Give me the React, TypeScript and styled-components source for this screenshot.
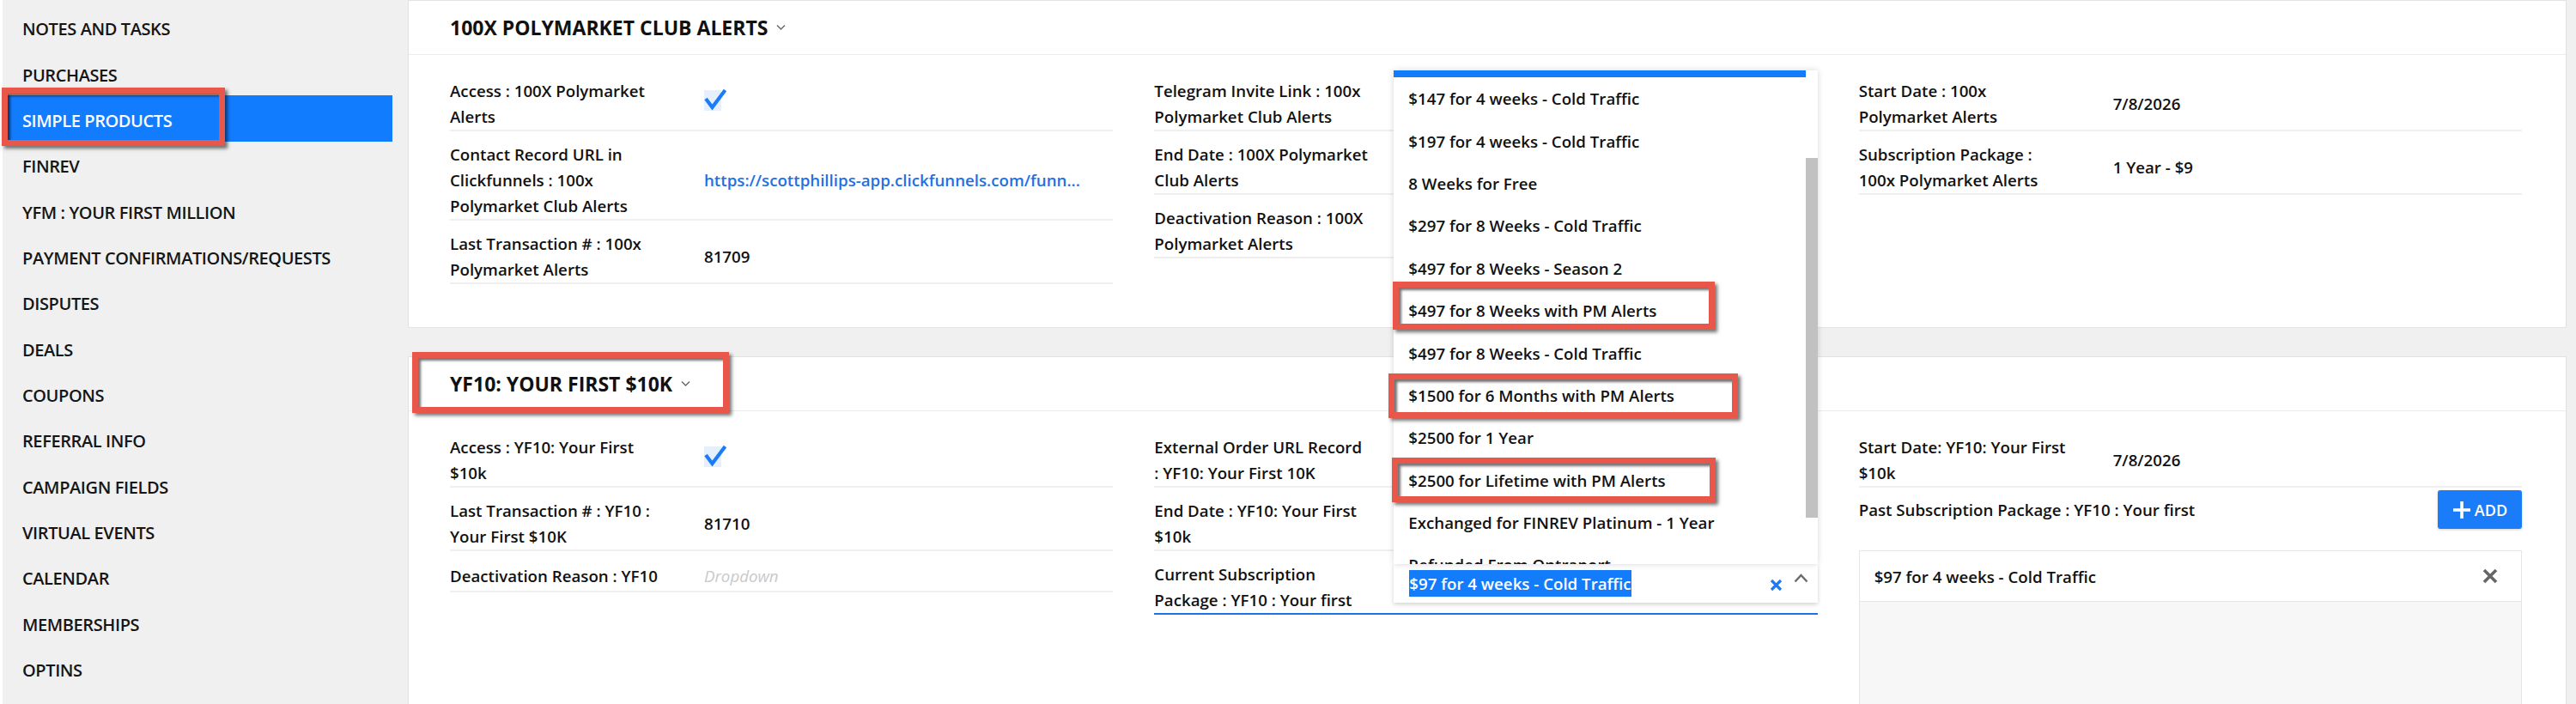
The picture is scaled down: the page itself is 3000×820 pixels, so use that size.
import React from "react";
import styled, { createGlobalStyle } from "styled-components";

type FieldKind = "check" | "link" | "text" | "placeholder" | "none" | "combo";

type Field = {
  label: string[];
  kind: FieldKind;
  value?: string;
};

type Callout = { top: number; left: number; width: number; height: number };

const navItems = [
  "Notes and Tasks",
  "Purchases",
  "Simple Products",
  "FinRev",
  "YFM : Your First Million",
  "Payment Confirmations/Requests",
  "Disputes",
  "Deals",
  "Coupons",
  "Referral Info",
  "Campaign Fields",
  "Virtual Events",
  "Calendar",
  "Memberships",
  "Optins",
];

const packageOptions: { text: string; callout?: Callout }[] = [
  { text: "$147 for 4 weeks - Cold Traffic" },
  { text: "$197 for 4 weeks - Cold Traffic" },
  { text: "8 Weeks for Free" },
  { text: "$297 for 8 Weeks - Cold Traffic" },
  { text: "$497 for 8 Weeks - Season 2" },
  { text: "$497 for 8 Weeks with PM Alerts", callout: { top: -9, left: -1, width: 375, height: 56 } },
  { text: "$497 for 8 Weeks - Cold Traffic" },
  { text: "$1500 for 6 Months with PM Alerts", callout: { top: -1, left: -6, width: 407, height: 52 } },
  { text: "$2500 for 1 Year" },
  { text: "$2500 for Lifetime with PM Alerts", callout: { top: -2, left: -2, width: 377, height: 52 } },
  { text: "Exchanged for FINREV Platinum - 1 Year" },
  { text: "Refunded From Ontraport" },
];

const polymarketColumns: Field[][] = [
  [
    { label: ["Access : 100X Polymarket", "Alerts"], kind: "check" },
    {
      label: ["Contact Record URL in", "Clickfunnels : 100x", "Polymarket Club Alerts"],
      kind: "link",
      value: "https://scottphillips-app.clickfunnels.com/funn...",
    },
    { label: ["Last Transaction # : 100x", "Polymarket Alerts"], kind: "text", value: "81709" },
  ],
  [
    { label: ["Telegram Invite Link : 100x", "Polymarket Club Alerts"], kind: "none" },
    { label: ["End Date : 100X Polymarket", "Club Alerts"], kind: "none" },
    { label: ["Deactivation Reason : 100X", "Polymarket Alerts"], kind: "none" },
  ],
  [
    { label: ["Start Date : 100x", "Polymarket Alerts"], kind: "text", value: "7/8/2026" },
    { label: ["Subscription Package :", "100x Polymarket Alerts"], kind: "text", value: "1 Year - $9" },
  ],
];

const yf10Columns: Field[][] = [
  [
    { label: ["Access : YF10: Your First", "$10k"], kind: "check" },
    { label: ["Last Transaction # : YF10 :", "Your First $10K"], kind: "text", value: "81710" },
    { label: ["Deactivation Reason : YF10"], kind: "placeholder", value: "Dropdown" },
  ],
  [
    { label: ["External Order URL Record", ": YF10: Your First 10K"], kind: "none" },
    { label: ["End Date : YF10: Your First", "$10k"], kind: "none" },
    { label: ["Current Subscription", "Package : YF10 : Your first"], kind: "combo" },
  ],
  [{ label: ["Start Date: YF10: Your First", "$10k"], kind: "text", value: "7/8/2026" }],
];

const GlobalStyle = createGlobalStyle`
  html, body {
    margin: 0;
    padding: 0;
    background: #fff;
  }
  body {
    font-family: "Open Sans", "Noto Sans", sans-serif;
    color: #111;
  }
  * {
    box-sizing: border-box;
  }
`;

const Page = styled.div`
  display: flex;
  width: 3000px;
  height: 820px;
  overflow: hidden;
  padding-left: 3px;
  background: #fff;
`;

const Sidebar = styled.nav`
  flex: 0 0 472px;
  background: #f0f0f0;
  padding: 4.8px 18px 0 0;
`;

const NavItem = styled.div<{ $active?: boolean }>`
  position: relative;
  height: 53.33px;
  display: flex;
  align-items: center;
  padding: 5px 0 0 23px;
  font-size: 20px;
  font-weight: 600;
  letter-spacing: -0.4px;
  text-transform: uppercase;
  color: ${(p) => (p.$active ? "#fff" : "#151515")};
  background: ${(p) => (p.$active ? "#127cff" : "transparent")};
`;

const RedBox = styled.span<{ $box: Callout }>`
  position: absolute;
  top: ${(p) => p.$box.top}px;
  left: ${(p) => p.$box.left}px;
  width: ${(p) => p.$box.width}px;
  height: ${(p) => p.$box.height}px;
  border: 7px solid #e9574b;
  box-shadow: 3px 3px 4px rgba(0, 0, 0, 0.55), inset 3px 3px 3px rgba(0, 0, 0, 0.55);
  pointer-events: none;
  z-index: 5;
`;

const Main = styled.main`
  flex: 1;
  display: flex;
  flex-direction: column;
  gap: 33px;
  padding-right: 11px;
  background: #f0f0f0;
`;

const Card = styled.section`
  flex-shrink: 0;
  background: #fff;
  border: 1px solid #e2e2e2;
`;

const CardHeader = styled.header`
  position: relative;
  height: 63px;
  display: flex;
  align-items: center;
  gap: 10px;
  padding-left: 48px;
  border-bottom: 1px solid #ececec;
  font-size: 23px;
  font-weight: 700;
  text-transform: uppercase;
  color: #111;
`;

const CardBody = styled.div<{ $bottom: number }>`
  display: grid;
  grid-template-columns: repeat(3, 1fr);
  align-items: start;
  column-gap: 48px;
  padding: 15px 51px ${(p) => p.$bottom}px 48px;
`;

const Column = styled.div`
  display: flex;
  flex-direction: column;
`;

const Row = styled.div<{ $focused?: boolean }>`
  position: relative;
  display: grid;
  grid-template-columns: 296px 1fr;
  align-items: center;
  padding-top: 12px;
  border-bottom: 2px solid ${(p) => (p.$focused ? "#1d72e8" : "#efefef")};
`;

const Label = styled.div`
  font-size: 18.7px;
  font-weight: 600;
  line-height: 30px;
  white-space: nowrap;
`;

const Value = styled.div`
  font-size: 18.7px;
  font-weight: 600;
  line-height: 30px;
  white-space: nowrap;
`;

const LinkValue = styled.a`
  font-size: 18.7px;
  font-weight: 600;
  line-height: 30px;
  color: #1f6fe5;
  text-decoration: none;
  white-space: nowrap;
`;

const Placeholder = styled.div`
  font-size: 18.7px;
  line-height: 34px;
  font-style: italic;
  color: #c9c9c9;
`;

const CheckWrap = styled.div`
  display: flex;
  margin-bottom: 11px;
`;

const SelectBox = styled.div`
  position: absolute;
  left: 279px;
  right: 0;
  top: 15px;
  height: 45px;
  display: flex;
  align-items: center;
  padding: 0 11px 0 18px;
  background: #fff;
  box-shadow: 0 2px 5px rgba(0, 0, 0, 0.18);
  z-index: 20;
`;

const SelectedText = styled.span`
  font-size: 18.7px;
  font-weight: 600;
  line-height: 31px;
  color: #fff;
  background: #137cfb;
  white-space: nowrap;
`;

const SelectIcons = styled.div`
  margin-left: auto;
  align-self: stretch;
  display: flex;
  gap: 13px;
`;

const IconSlot = styled.span<{ $top: number }>`
  display: flex;
  padding-top: ${(p) => p.$top}px;
`;

const Menu = styled.div`
  position: absolute;
  left: 0;
  right: 0;
  bottom: 100%;
  height: 575px;
  display: flex;
  background: #fff;
  box-shadow: 0 0 7px rgba(0, 0, 0, 0.16);
`;

const OptionList = styled.div`
  flex: 1;
  overflow-x: visible;
  overflow-y: clip;
`;

const Option = styled.div<{ $selected?: boolean }>`
  position: relative;
  height: 49.4px;
  display: flex;
  align-items: center;
  padding-left: 17px;
  font-size: 18.7px;
  font-weight: 600;
  white-space: nowrap;
  color: ${(p) => (p.$selected ? "#fff" : "#111")};
  background: ${(p) => (p.$selected ? "#137cfb" : "transparent")};
  margin-top: ${(p) => (p.$selected ? "-41.4px" : "0")};
`;

const ScrollTrack = styled.div`
  flex: 0 0 14px;
  padding-top: 102px;
  background: #fff;
`;

const ScrollThumb = styled.div`
  height: 419px;
  background: #c1c1c1;
`;

const PastRow = styled.div`
  display: flex;
  align-items: center;
  justify-content: space-between;
  padding-top: 3px;
`;

const AddButton = styled.button`
  width: 98px;
  height: 45px;
  display: flex;
  align-items: center;
  justify-content: center;
  gap: 4px;
  border: 0;
  border-radius: 3px;
  background: #1a7cf9;
  box-shadow: 0 1px 3px rgba(0, 0, 0, 0.2);
  color: #fff;
  font-family: "Open Sans", sans-serif;
  font-size: 18px;
  font-weight: 600;
`;

const PastBox = styled.div`
  margin-top: 25px;
  min-height: 320px;
  border: 1px solid #e6e6e6;
  background: #f7f7f7;
`;

const PastItem = styled.div`
  height: 59px;
  display: flex;
  align-items: center;
  justify-content: space-between;
  padding: 0 27px 0 17px;
  background: #fff;
  border-bottom: 1px solid #e6e6e6;
  font-size: 18.7px;
  font-weight: 600;
`;

const ChevronDown = () => (
  <svg width="11" height="8" viewBox="0 0 11 8">
    <polyline points="1,1.5 5.5,6 10,1.5" fill="none" stroke="#666" strokeWidth="1.4" />
  </svg>
);

const CheckIcon = () => (
  <svg width="27" height="26" viewBox="0 0 27 26">
    <rect x="0" y="2" width="20" height="24" fill="#e6effc" />
    <polyline
      points="2,12 9.5,22 24.5,2"
      fill="none"
      stroke="#1a7cf9"
      strokeWidth="4.2"
      strokeLinejoin="miter"
    />
  </svg>
);

const ClearIcon = () => (
  <svg width="15" height="15" viewBox="0 0 15 15">
    <path d="M2 2 L13 13 M13 2 L2 13" stroke="#1a7cf9" strokeWidth="3.2" />
  </svg>
);

const CaretUp = () => (
  <svg width="17" height="11" viewBox="0 0 17 11">
    <polyline points="1.5,9.5 8.5,2 15.5,9.5" fill="none" stroke="#6a6a6a" strokeWidth="2.4" />
  </svg>
);

const RemoveIcon = () => (
  <svg width="18" height="18" viewBox="0 0 18 18">
    <path d="M2 2 L16 16 M16 2 L2 16" stroke="#666" strokeWidth="3.6" />
  </svg>
);

const PlusIcon = () => (
  <svg width="22" height="22" viewBox="0 0 22 22">
    <path d="M11 1 V21 M1 11 H21" stroke="#fff" strokeWidth="3.6" />
  </svg>
);

const PackageCombo = () => (
  <SelectBox>
    <Menu>
      <OptionList>
        <Option $selected>$97 for 4 weeks - Cold Traffic</Option>
        {packageOptions.map((opt) => (
          <Option key={opt.text}>
            {opt.text}
            {opt.callout && <RedBox $box={opt.callout} />}
          </Option>
        ))}
      </OptionList>
      <ScrollTrack>
        <ScrollThumb />
      </ScrollTrack>
    </Menu>
    <SelectedText>$97 for 4 weeks - Cold Traffic</SelectedText>
    <SelectIcons>
      <IconSlot $top={17}>
        <ClearIcon />
      </IconSlot>
      <IconSlot $top={11}>
        <CaretUp />
      </IconSlot>
    </SelectIcons>
  </SelectBox>
);

const FieldRow = ({ field }: { field: Field }) => {
  let value: React.ReactNode = <span />;
  if (field.kind === "check")
    value = (
      <CheckWrap>
        <CheckIcon />
      </CheckWrap>
    );
  if (field.kind === "link") value = <LinkValue>{field.value}</LinkValue>;
  if (field.kind === "text") value = <Value>{field.value}</Value>;
  if (field.kind === "placeholder") value = <Placeholder>{field.value}</Placeholder>;

  return (
    <Row $focused={field.kind === "combo"}>
      <Label>
        {field.label.map((line, i) => (
          <React.Fragment key={i}>
            {i > 0 && <br />}
            {line}
          </React.Fragment>
        ))}
      </Label>
      {value}
      {field.kind === "combo" && <PackageCombo />}
    </Row>
  );
};

export default function App() {
  return (
    <>
      <GlobalStyle />
      <Page>
        <Sidebar>
          {navItems.map((item) => (
            <NavItem key={item} $active={item === "Simple Products"}>
              {item}
              {item === "Simple Products" && (
                <RedBox $box={{ top: -9.5, left: -1, width: 260, height: 68 }} />
              )}
            </NavItem>
          ))}
        </Sidebar>

        <Main>
          <Card>
            <CardHeader>
              100X Polymarket Club Alerts
              <ChevronDown />
            </CardHeader>
            <CardBody $bottom={50}>
              {polymarketColumns.map((col, ci) => (
                <Column key={ci}>
                  {col.map((f) => (
                    <FieldRow key={f.label.join(" ")} field={f} />
                  ))}
                </Column>
              ))}
            </CardBody>
          </Card>

          <Card>
            <CardHeader>
              YF10: Your First $10K
              <ChevronDown />
              <RedBox $box={{ top: -6, left: 4, width: 369, height: 71 }} />
            </CardHeader>
            <CardBody $bottom={60}>
              {yf10Columns.map((col, ci) => (
                <Column key={ci}>
                  {col.map((f) => (
                    <FieldRow key={f.label.join(" ")} field={f} />
                  ))}
                  {ci === 2 && (
                    <>
                      <PastRow>
                        <Label>Past Subscription Package : YF10 : Your first</Label>
                        <AddButton>
                          <PlusIcon />
                          ADD
                        </AddButton>
                      </PastRow>
                      <PastBox>
                        <PastItem>
                          $97 for 4 weeks - Cold Traffic
                          <RemoveIcon />
                        </PastItem>
                      </PastBox>
                    </>
                  )}
                </Column>
              ))}
            </CardBody>
          </Card>
        </Main>
      </Page>
    </>
  );
}
